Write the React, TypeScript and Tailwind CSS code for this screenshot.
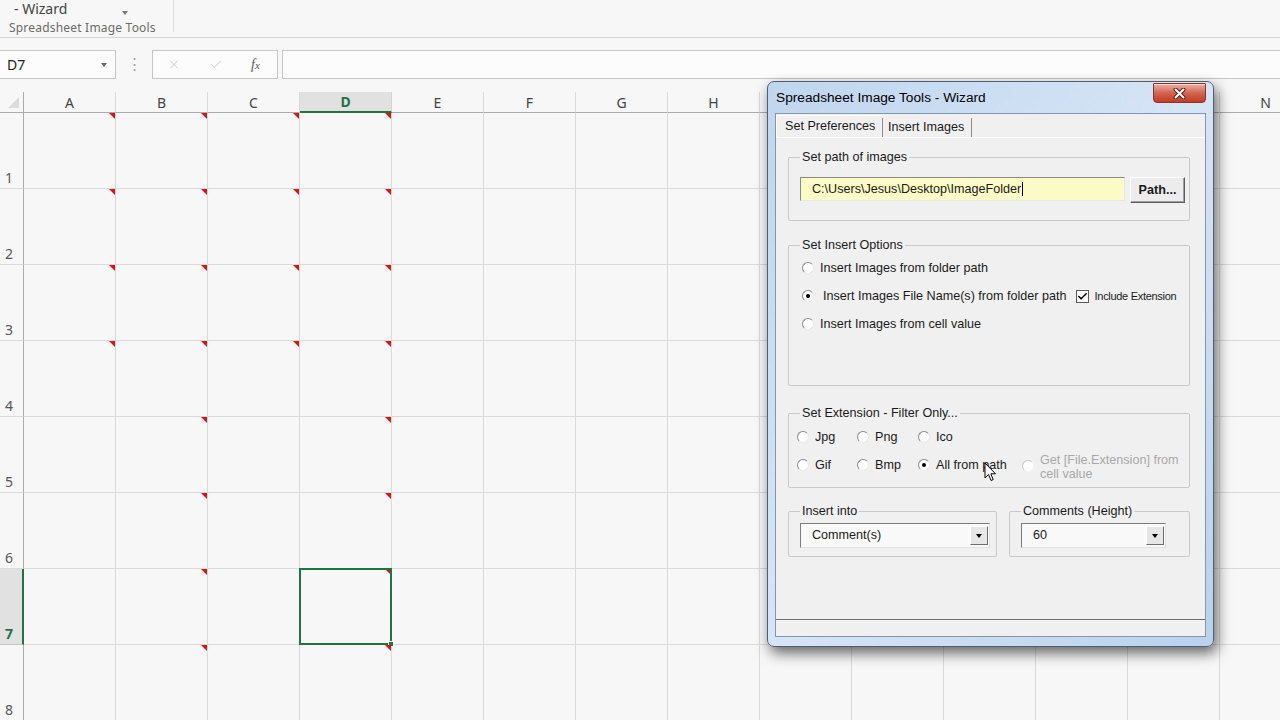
import { Fragment } from "react"
import { X, Check } from "lucide-react"

const COLS = ["A", "B", "C", "D", "E", "F", "G", "H", "I", "J", "K", "L", "M", "N"]
const ROWS = [1, 2, 3, 4, 5, 6, 7, 8]
// headers that sit under the wizard window
const HIDDEN = ["I", "J", "K", "L", "M"]

// comment markers: rows 1-4 have them in A-D, the rest only in B and D
const hasNote = (r: number, c: number) => (r <= 4 ? c <= 3 : c === 1 || c === 3)

const excelFont = { fontFamily: '"Noto Sans", "Open Sans", Arial, sans-serif' }
const dlgFont = { fontFamily: '"Liberation Sans", Arial, sans-serif' }

const DownTri = ({ color = "border-t-black" }: { color?: string }) => (
  <span className={`inline-block h-0 w-0 border-l-[3.5px] border-r-[3.5px] border-t-[4px] border-l-transparent border-r-transparent ${color}`} />
)

function Radio({ on, disabled }: { on?: boolean; disabled?: boolean }) {
  return (
    <span
      className={`flex h-[12px] w-[12px] shrink-0 items-center justify-center rounded-full border bg-white ${
        disabled
          ? "border-t-[#c4c4c4] border-l-[#c4c4c4] border-r-[#f4f4f4] border-b-[#f4f4f4]"
          : "border-t-[#8a8a8a] border-l-[#8a8a8a] border-r-[#e8e8e8] border-b-[#e8e8e8]"
      }`}
    >
      {on && <span className="h-[4px] w-[4px] rounded-full bg-black" />}
    </span>
  )
}

function Option({ label, on, className = "" }: { label: string; on?: boolean; className?: string }) {
  return (
    <div className={`flex h-[20px] items-center gap-[6px] whitespace-nowrap ${className}`}>
      <Radio on={on} />
      <span className="text-[12.6px] text-[#1a1a1a]">{label}</span>
    </div>
  )
}

function Select({ value, width }: { value: string; width: string }) {
  return (
    <div className={`flex h-[25px] ${width} border border-t-[#7b7b7b] border-l-[#7b7b7b] border-r-[#e2e2e2] border-b-[#e2e2e2] bg-[#f9f9f9]`}>
      <span className="flex-1 pl-[11px] text-[12.6px] leading-[23px] text-[#1a1a1a]">{value}</span>
      <span className="my-[2px] mr-[1px] flex w-[18px] items-center justify-center border border-t-white border-l-white border-r-[#6e6e6e] border-b-[#6e6e6e] bg-[#e6e6e6]">
        <DownTri />
      </span>
    </div>
  )
}

function CloseButton() {
  return (
    <div className="mt-[1px] flex h-[20px] w-[53px] items-center justify-center rounded-b-[4px] rounded-t-[1px] border border-[#8a3428] bg-gradient-to-b from-[#eab0a6] via-[#d2644f] to-[#c13b25] shadow-[inset_0_1px_0_rgba(255,255,255,0.5)]">
      <svg width="13" height="11" viewBox="0 0 13 11">
        <path d="M2.5 1.5 L10.5 9.5 M10.5 1.5 L2.5 9.5" stroke="#5a2018" strokeWidth="4" strokeLinecap="round" />
        <path d="M2.5 1.5 L10.5 9.5 M10.5 1.5 L2.5 9.5" stroke="#ffffff" strokeWidth="2" strokeLinecap="round" />
      </svg>
    </div>
  )
}

function Wizard() {
  return (
    <div
      style={dlgFont}
      className="absolute left-[767px] top-[81px] z-20 flex h-[566px] w-[447px] flex-col rounded-[7px] border border-[#4f5f72] bg-gradient-to-br from-[#bfd6ee] via-[#d6e5f6] to-[#b9d2ec] shadow-[3px_6px_14px_rgba(0,0,0,0.6)]"
    >
      {/* title bar */}
      <div className="flex h-[31px] items-start justify-between pl-[8px] pr-[7px]">
        <span className="pt-[8px] text-[13.7px] leading-[16px] text-black">Spreadsheet Image Tools - Wizard</span>
        <CloseButton />
      </div>

      {/* client area */}
      <div className="mx-[7px] mb-[9px] flex flex-1 flex-col border border-[#8296ad] bg-[#f0f0f0]">
        {/* tabs */}
        <div className="flex h-[23px] items-end whitespace-nowrap">
          <div className="flex h-[22px] w-[106px] items-center border-t border-l border-white pl-[8px] text-[12.6px] text-[#1a1a1a]">
            Set Preferences
          </div>
          <div className="flex h-[19px] w-[90px] items-center border-l border-r border-[#8c8c8c] pl-[5px] text-[12.6px] text-[#1a1a1a]">
            Insert Images
          </div>
        </div>

        {/* tab panel */}
        <div className="flex flex-1 flex-col border-t border-b border-t-white border-b-[#6e6e6e] pl-[12px] pt-[11px]">
          <fieldset className="w-[402px] rounded-[2px] border border-[#c9c9c9] pl-[11px] pr-[4px] pt-[12px] pb-[17px]">
            <legend className="px-[2px] text-[12.6px] leading-[16px] text-[#1a1a1a]">Set path of images</legend>
            <div className="flex h-[26px] items-start">
              <div className="flex h-[24px] w-[325px] items-center whitespace-nowrap border border-t-[#8a8a8a] border-l-[#8a8a8a] border-r-[#e6e6e6] border-b-[#e6e6e6] bg-[#fbfbc6] pl-[11px] text-[12.6px] text-[#1a1a1a]">
                C:\Users\Jesus\Desktop\ImageFolder
                <span className="ml-px h-[14px] w-px bg-black" />
              </div>
              <button className="ml-[5px] h-[26px] w-[55px] border border-t-white border-l-white border-r-[#5c5c5c] border-b-[#5c5c5c] bg-[#ececec] text-[12.6px] font-bold text-[#1a1a1a] shadow-[inset_-1px_-1px_0_#a0a0a0]">
                Path...
              </button>
            </div>
          </fieldset>

          <fieldset className="mt-[16px] w-[402px] rounded-[2px] border border-[#c9c9c9] pl-[13px] pr-[2px] pt-[5px] pb-[51px]">
            <legend className="-ml-[2px] px-[2px] text-[12.6px] leading-[16px] text-[#1a1a1a]">Set Insert Options</legend>
            <div className="flex flex-col gap-[8px]">
              <Option label="Insert Images from folder path" />
              <div className="flex h-[20px] items-center whitespace-nowrap">
                <Radio on />
                <span className="ml-[9px] text-[12.6px] text-[#1a1a1a]">Insert Images File Name(s) from folder path</span>
                <span className="ml-[9px] flex h-[13px] w-[13px] shrink-0 items-center justify-center border border-[#5a5a5a] bg-white">
                  <Check className="h-[11px] w-[11px] text-black" strokeWidth={3.5} />
                </span>
                <span className="ml-[6px] text-[11px] tracking-[-0.3px] text-[#1a1a1a]">Include Extension</span>
              </div>
              <Option label="Insert Images from cell value" />
            </div>
          </fieldset>

          <fieldset className="mt-[19px] w-[402px] rounded-[2px] border border-[#c9c9c9] pl-[8px] pr-[2px] pt-[6px] pb-[12px]">
            <legend className="ml-[3px] px-[2px] text-[12.6px] leading-[16px] text-[#1a1a1a]">Set Extension - Filter Only...</legend>
            <div className="grid grid-cols-[60px_61px_104px_1fr] gap-y-[8px]">
              <Option label="Jpg" />
              <Option label="Png" />
              <Option label="Ico" className="col-span-2" />
              <Option label="Gif" />
              <Option label="Bmp" />
              <Option label="All from path" on />
              <div className="flex h-[20px] items-start gap-[6px] whitespace-nowrap">
                <span className="mt-[5px]">
                  <Radio disabled />
                </span>
                <span className="-mt-[2px] text-[12.6px] leading-[14px] text-[#a8a8a8]">
                  Get [File.Extension] from
                  <br />
                  cell value
                </span>
              </div>
            </div>
          </fieldset>

          <div className="mt-[15px] flex w-[402px] gap-[12px]">
            <fieldset className="w-[210px] rounded-[2px] border border-[#c9c9c9] pl-[11px] pr-[6px] pt-[4px] pb-[8px]">
              <legend className="px-[2px] text-[12.6px] leading-[16px] text-[#1a1a1a]">Insert into</legend>
              <Select value="Comment(s)" width="w-[190px]" />
            </fieldset>
            <fieldset className="w-[181px] rounded-[2px] border border-[#c9c9c9] pl-[11px] pr-[23px] pt-[4px] pb-[8px]">
              <legend className="px-[2px] text-[12.6px] leading-[16px] text-[#1a1a1a]">Comments (Height)</legend>
              <Select value="60" width="w-[145px]" />
            </fieldset>
          </div>
        </div>
        <div className="h-[16px]" />
      </div>
    </div>
  )
}

function Cursor() {
  return (
    <svg className="absolute left-[984px] top-[462px] z-30" width="13" height="20" viewBox="0 0 13 20">
      <path d="M1 1 L1 16 L4.5 12.5 L7 18.5 L9.2 17.6 L6.8 11.8 L11.5 11.8 Z" fill="#ffffff" stroke="#000000" strokeWidth="1" strokeLinejoin="round" />
    </svg>
  )
}

function Sheet() {
  return (
    <div className="mt-[13px] grid grid-cols-[24px_repeat(14,92px)] grid-rows-[21px_repeat(8,76px)]" style={excelFont}>
      {/* corner */}
      <div className="flex items-end justify-end border-r border-b border-[#ababab] pr-[4px] pb-[4px]">
        <span className="h-0 w-0 border-b-[11px] border-l-[11px] border-b-[#dcdcdc] border-l-transparent" />
      </div>
      {COLS.map((c) => (
        <div
          key={c}
          className={`flex items-center justify-center text-[14px] ${
            c === "D"
              ? "border-r border-[#d4d4d4] border-b-2 border-b-[#217346] bg-[#e1e1e1] font-bold text-[#217346]"
              : "border-r border-b border-r-[#dadada] border-b-[#ababab] text-[#444]"
          }`}
        >
          {HIDDEN.includes(c) ? null : c}
        </div>
      ))}
      {ROWS.map((r) => (
        <Fragment key={r}>
          <div
            className={`flex items-end pl-[5px] pb-[1px] text-[14px] leading-[18px] ${
              r === 7
                ? "border-r-2 border-b border-r-[#217346] border-b-[#c6c6c6] bg-[#e1e1e1] font-bold text-[#217346]"
                : "border-r border-b border-r-[#ababab] border-b-[#dadada] text-[#555]"
            }`}
          >
            {r}
          </div>
          {COLS.map((c, ci) => (
            <div key={c} className="relative border-r border-b border-[#dadada] bg-[#f7f7f7]">
              {hasNote(r, ci) && (
                <span className="absolute top-0 right-0 z-10 h-0 w-0 border-t-[6px] border-l-[6px] border-t-[#e01010] border-l-transparent" />
              )}
              {r === 7 && c === "D" && (
                <span className="absolute -top-px -left-px -right-px -bottom-px z-10 border-2 border-[#217346]">
                  <span className="absolute -right-[4px] -bottom-[4px] h-[6px] w-[6px] border border-white bg-[#217346]" />
                </span>
              )}
            </div>
          ))}
        </Fragment>
      ))}
    </div>
  )
}

export default function App() {
  return (
    <div className="relative h-[720px] w-[1280px] overflow-hidden bg-[#f7f7f7]" style={excelFont}>
      {/* ribbon remnant */}
      <div className="flex h-[38px] border-b border-[#d6d6d6]">
        <div className="h-[32px] w-[174px] border-r border-[#dedede]">
          <div className="mt-[2px] flex h-[13px] items-center">
            <span className="pl-[14px] text-[14px] leading-[14px] text-[#444]">- Wizard</span>
            <span className="ml-[55px]">
              <DownTri color="border-t-[#777]" />
            </span>
          </div>
          <div className="mt-[6px] pl-[9px] text-[12px] leading-[14px] tracking-[0.2px] text-[#6b6b6b]">Spreadsheet Image Tools</div>
        </div>
      </div>

      {/* formula bar */}
      <div className="mt-[12px] flex h-[29px] items-stretch">
        <div className="flex w-[116px] items-center justify-between border-y border-r border-[#c6c6c6] bg-[#fcfcfc] pl-[7px] pr-[8px]">
          <span className="text-[14px] text-[#222]">D7</span>
          <DownTri color="border-t-[#666]" />
        </div>
        <div className="flex w-[36px] items-center justify-center pb-[2px] text-[15px] text-[#a0a0a0]">⋮</div>
        <div className="flex w-[126px] items-center border border-[#c6c6c6] bg-[#fcfcfc]">
          <span className="ml-[14px] flex w-[14px] justify-center">
            <X className="h-[15px] w-[15px] text-[#c4c4c4]" strokeWidth={1.6} />
          </span>
          <span className="ml-[28px] flex w-[14px] justify-center">
            <Check className="h-[15px] w-[15px] text-[#c4c4c4]" strokeWidth={1.6} />
          </span>
          <span
            className="ml-[28px] text-[14px] italic text-[#555]"
            style={{ fontFamily: '"Liberation Serif", "Times New Roman", serif' }}
          >
            f<span className="text-[11px]">x</span>
          </span>
        </div>
        <div className="ml-[4px] flex-1 border-y border-l border-[#c6c6c6] bg-[#fcfcfc]" />
      </div>

      <Sheet />
      <Wizard />
      <Cursor />
    </div>
  )
}
